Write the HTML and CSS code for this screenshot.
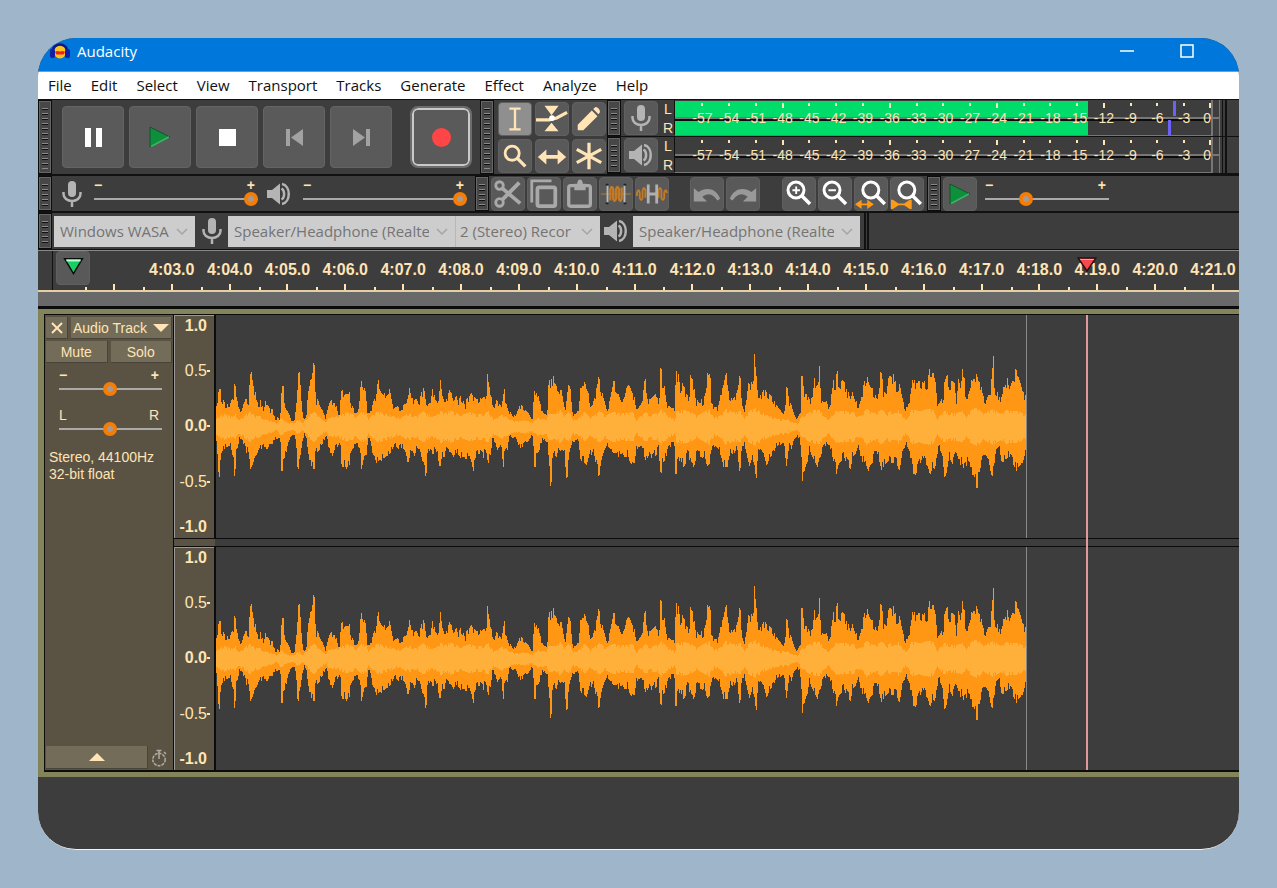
FILE: index.html
```html
<!DOCTYPE html>
<html lang="en">
<head>
<meta charset="utf-8">
<title>Audacity</title>
<link rel="stylesheet" href="styles.css">
</head>
<body>
<svg class="defs" aria-hidden="true">
  <symbol id="mic" viewBox="0 0 20 28"><rect x="6" y="1" width="8" height="16" rx="4" fill="currentColor"/><path d="M1.500 12v2a8.500 7 0 0 0 17 0v-2M10 21v6" fill="none" stroke="currentColor" stroke-width="2.500"/></symbol>
  <symbol id="speaker" viewBox="0 0 26 24"><path d="M1 8h5l8-6.500v21L6 16H1z" fill="currentColor"/><path d="M15.500 6.500c3.500 2 3.500 9 0 11M16 2c9 1.500 9 18.500 0 20" fill="none" stroke="currentColor" stroke-width="2.500"/></symbol>
  <symbol id="play" viewBox="0 0 24 24"><path d="M2 2v20l20-10z" fill="#0e8f3c" stroke="#17502c" stroke-width="1"/><path d="M3 21.500l18-9.500" stroke="#3fb468" stroke-width="1.500"/></symbol>
  <symbol id="lens" viewBox="0 0 32 32"><circle cx="13" cy="12" r="8" fill="none" stroke="#fff" stroke-width="3"/><path d="M19 18l8 8" stroke="#fff" stroke-width="3.500"/></symbol>
  <symbol id="chevron" viewBox="0 0 12 8"><path d="M1 1l5 5 5-5" fill="none" stroke="#a5a5a5" stroke-width="1.500"/></symbol>
  <symbol id="wave" viewBox="18 -75 2430 672" preserveAspectRatio="none">
    <g class="envelope" fill="#ff9614" shape-rendering="crispEdges">
      <path d="M18 262L18 215 22 180 25 160 29 147 32 148 34 190 38 178 42 182 48 196 56 192 62 188 66 178 72 182 73 131 76 131 78 165 82 182 86 205 92 218 98 205 102 190 106 180 110 178 113 182 116 200 117 115 122 102 125 103 128 130 134 150 140 168 144 200 148 205 151 180 154 190 160 208 165 183 172 183 176 200 182 212 187 205 190 225 198 238 206 230 210 242 214 165 217 140 221 140 224 200 230 212 236 222 242 236 248 245 254 238 258 205 262 165 265 102 270 102 272 150 276 205 280 235 288 235 294 165 302 120 306 122 310 75 315 75 317 185 324 180 330 200 338 212 346 235 352 215 358 190 366 180 370 192 378 190 382 215 388 225 394 152 400 152 405 175 409 145 413 145 414 175 418 147 420 190 428 200 436 220 444 205 450 180 452 99 456 99 460 150 464 145 470 170 473 222 480 220 486 200 492 182 500 160 504 120 508 120 512 160 520 168 528 155 536 142 540 150 544 178 548 195 554 205 562 200 570 205 580 198 592 190 594 145 600 150 604 175 614 180 620 178 626 195 632 165 640 148 646 160 652 200 660 190 664 150 670 152 676 178 684 195 688 165 690 120 694 120 698 175 706 190 714 165 718 150 724 160 730 185 740 168 744 190 750 168 756 172 766 200 770 175 780 170 784 162 790 168 800 180 808 172 815 180 822 170 828 180 832 102 836 102 840 165 846 175 852 210 860 180 868 190 876 205 880 145 884 148 886 190 894 195 898 222 904 215 910 228 920 222 928 200 934 196 940 200 948 212 956 220 962 235 968 235 972 160 980 140 984 165 990 190 998 215 1004 225 1012 225 1016 125 1026 118 1034 103 1040 115 1042 150 1048 165 1052 150 1058 150 1064 205 1068 215 1072 135 1080 140 1084 165 1088 225 1100 222 1106 205 1110 150 1118 140 1122 103 1126 103 1130 155 1136 160 1140 205 1148 195 1156 165 1164 130 1166 108 1170 130 1178 165 1186 195 1194 205 1200 180 1208 140 1210 98 1214 98 1216 160 1226 165 1231 180V262z"/>
      <path d="M18 262L18 305 22 330 25 425 28 425 30 370 34 340 42 330 50 322 58 318 64 325 68 370 72 372 73 412 77 412 78 350 82 330 88 300 96 298 100 310 106 330 110 340 114 330 117 372 121 388 127 378 134 355 142 340 148 325 154 330 164 322 172 328 180 312 188 315 194 300 202 300 208 292 212 310 214 392 218 392 220 360 228 345 234 310 242 292 250 285 256 295 260 330 263 388 267 388 269 350 274 345 278 300 284 285 290 295 294 360 302 362 306 388 314 388 317 340 326 335 334 318 344 300 350 295 356 325 362 360 368 350 374 330 384 322 390 305 395 382 402 380 410 385 418 382 422 335 432 325 440 320 448 325 452 340 455 398 459 398 461 350 470 345 474 300 480 305 486 340 494 350 500 375 506 360 514 365 522 355 530 350 540 345 548 325 558 320 566 330 576 322 588 340 594 375 600 350 606 330 614 350 622 325 630 330 636 360 644 378 646 408 649 408 652 360 656 325 662 345 670 345 676 328 682 345 690 385 696 350 704 355 708 318 714 345 722 335 730 352 740 340 752 355 760 350 770 360 778 345 786 375 787 405 790 405 792 365 800 348 810 342 820 355 828 328 834 375 840 355 848 300 856 310 862 335 868 320 876 340 880 385 884 345 892 335 898 290 908 295 918 292 928 325 938 322 946 312 956 305 964 290 970 300 972 384 978 384 980 345 988 335 996 305 1004 300 1012 310 1016 370 1020 380 1020 440 1024 440 1026 380 1032 350 1040 350 1046 325 1052 335 1058 330 1064 345 1069 412 1073 412 1075 360 1080 350 1086 305 1098 310 1106 305 1112 365 1122 368 1130 378 1138 345 1146 345 1150 325 1156 365 1165 408 1169 408 1172 370 1182 335 1190 320 1200 325 1208 355 1218 358 1231 345V262z"/>
      <g transform="translate(1230 0)">
        <path d="M0 262L0 180 6 170 12 180 20 145 26 136 32 150 40 165 46 180 52 210 60 200 68 185 72 130 78 115 82 180 94 178 106 165 114 180 120 175 121 88 125 88 126 150 134 140 138 185 146 200 156 205 164 205 168 98 176 105 180 145 186 130 194 145 200 165 208 170 210 108 218 120 222 135 228 190 236 172 244 180 250 195 252 145 258 165 262 110 266 72 270 72 274 190 282 200 292 205 298 190 304 150 310 140 318 98 324 115 328 165 338 180 346 168 354 150 358 108 362 120 366 180 374 210 380 180 384 135 392 128 400 138 403 46 408 46 410 130 416 180 422 165 432 150 442 158 450 165 458 175 466 190 476 205 488 220 496 210 499 140 503 150 508 185 516 200 522 225 530 238 538 225 542 210 544 108 550 110 554 160 562 165 570 180 578 175 584 108 590 140 596 130 597 78 601 78 602 170 610 190 620 185 628 205 636 155 642 110 646 160 650 96 654 96 656 160 662 122 674 125 680 150 684 190 686 145 694 170 700 150 708 180 716 205 724 175 732 130 740 103 744 120 750 140 762 155 770 180 776 140 782 95 786 100 790 155 800 165 806 110 814 115 824 100 828 140 838 130 846 170 856 205 864 200 874 150 880 102 884 125 894 130 900 120 908 132 914 125 922 130 928 88 932 115 940 98 946 125 950 165 954 198 962 185 970 170 974 125 982 105 988 130 1000 125 1006 135 1010 185 1016 115 1022 150 1028 85 1032 85 1036 175 1044 180 1050 120 1056 125 1062 118 1068 130 1070 95 1074 120 1082 130 1088 165 1096 180 1104 150 1114 145 1116 50 1121 50 1122 145 1130 150 1140 180 1146 145 1154 145 1162 115 1168 150 1176 125 1184 125 1187 82 1192 110 1200 125 1206 150 1214 165 1218 165V262z"/>
        <path d="M0 262L0 345 8 340 16 355 24 345 30 370 44 370 48 335 56 322 66 318 74 355 80 368 84 345 92 360 100 340 108 350 116 325 121 398 125 398 128 370 138 355 146 330 156 315 164 320 165 405 169 405 172 378 182 355 190 385 198 370 204 320 210 375 216 365 222 385 230 345 238 350 246 355 254 350 262 382 270 370 276 335 286 318 296 330 302 345 310 382 322 382 330 340 340 345 350 330 356 370 360 405 364 350 372 310 380 345 388 378 396 360 404 375 407 412 411 412 413 350 420 325 430 340 440 378 450 355 460 345 468 322 480 315 490 310 496 345 498 392 502 360 508 320 514 330 522 300 532 292 540 300 546 370 547 425 552 425 554 385 562 370 568 330 576 350 586 370 596 390 602 350 610 330 618 315 628 315 636 345 642 370 650 405 654 380 662 365 672 350 684 380 692 390 698 350 706 345 716 315 724 365 734 370 742 418 748 380 758 370 768 330 776 355 784 392 792 380 804 365 814 370 826 370 840 392 846 340 858 315 868 330 878 400 888 405 900 375 908 350 916 372 924 380 930 408 938 385 946 385 950 350 958 325 968 350 973 415 980 400 988 350 998 375 1008 350 1016 380 1026 370 1034 395 1046 360 1050 405 1062 405 1069 445 1073 445 1074 395 1080 400 1086 350 1096 345 1106 360 1114 408 1120 408 1126 345 1138 330 1146 370 1156 360 1166 350 1178 370 1190 395 1200 375 1210 365 1214 345 1218 345V262z"/>
      </g>
    </g>
    <g id="rms" class="envelope" fill="#ffb03a" shape-rendering="crispEdges">
      <path d="M18 262L18 240 28 230 42 222 60 230 74 222 88 240 100 232 120 215 134 228 150 230 170 240 200 250 214 235 230 248 250 252 264 240 280 250 300 225 312 215 330 235 350 248 354 235 380 230 400 222 418 218 440 232 456 215 470 222 474 240 490 225 506 215 524 222 540 225 560 235 580 230 596 222 620 230 640 215 656 225 676 230 692 212 706 222 720 212 740 222 760 225 780 218 800 225 820 222 836 215 850 240 880 225 898 240 920 245 940 238 966 248 980 235 1010 240 1016 222 1036 225 1056 208 1064 228 1080 215 1086 240 1106 235 1124 218 1140 235 1170 215 1186 228 1212 215 1231 222V262z"/>
      <path transform="translate(1230 0)" d="M0 262L0 222 40 218 50 240 76 218 90 225 116 220 124 208 140 225 164 240 170 215 190 210 214 218 232 230 250 218 268 208 282 235 300 230 318 208 336 218 362 215 374 238 386 215 406 205 430 222 450 230 480 240 500 238 520 250 534 252 544 230 562 220 584 210 600 210 612 230 628 240 642 215 664 215 700 218 720 232 740 208 762 222 786 210 800 225 810 215 836 212 858 240 876 210 900 215 928 208 944 212 952 238 972 215 1000 222 1030 215 1040 235 1050 215 1074 202 1090 225 1118 208 1140 222 1160 212 1194 215 1218 225V262z"/>
    </g>
    <use href="#rms" transform="translate(0 524) scale(1 -1)"/>
  </symbol>
</svg>

<main class="window">
  <header class="titlebar">
    <svg class="logo" viewBox="0 0 20 20"><ellipse cx="10" cy="11" rx="6" ry="6.500" fill="#ffc21a"/><path d="M5 11l2-1 3 .5 3-.5 2 1-1.500 2.500h-7z" fill="#e8261c"/><path d="M3 11C2 1 18 1 17 11" fill="none" stroke="#101a86" stroke-width="2.500"/><rect x="0" y="8" width="5" height="9" rx="2" fill="#1520a0"/><rect x="15" y="8" width="5" height="9" rx="2" fill="#1520a0"/></svg>
    <h1 class="title">Audacity</h1>
    <button class="winbtn" aria-label="Minimize"><svg viewBox="0 0 14 14"><path d="M0 7h14" stroke="#fff" stroke-width="1.500"/></svg></button>
    <button class="winbtn" aria-label="Maximize"><svg viewBox="0 0 14 14"><rect x="1" y="1" width="12" height="12" fill="none" stroke="#fff" stroke-width="1.500"/></svg></button>
  </header>
  <nav class="menu">
    <button>File</button><button>Edit</button><button>Select</button><button>View</button><button>Transport</button><button>Tracks</button><button>Generate</button><button>Effect</button><button>Analyze</button><button>Help</button>
  </nav>

  <section class="row row-main">
    <span class="grip"></span>
    <div class="transport">
      <button class="big" aria-label="Pause"><svg viewBox="0 0 24 24"><path d="M4 3h6v19H4zM15 3h6v19h-6z" fill="#fff"/></svg></button>
      <button class="big" aria-label="Play"><svg><use href="#play"/></svg></button>
      <button class="big" aria-label="Stop"><svg viewBox="0 0 24 24"><path d="M4 4h17v17H4z" fill="#fff"/></svg></button>
      <button class="big" aria-label="Skip to start"><svg viewBox="0 0 24 24"><path d="M4 4h4v17H4zM21 4v17L9 12.500z" fill="#a2a2a2"/></svg></button>
      <button class="big" aria-label="Skip to end"><svg viewBox="0 0 24 24"><path d="M17 4h4v17h-4zM4 4v17l12-8.500z" fill="#a2a2a2"/></svg></button>
      <button class="big record" aria-label="Record"><i></i></button>
    </div>
    <span class="grip"></span>
    <div class="tools">
      <button class="tool active" aria-label="Selection tool"><svg viewBox="0 0 34 34"><path d="M11 6h12M11 28h12M17 6v22" stroke="#ffe4b5" stroke-width="2.500"/></svg></button>
      <button class="tool" aria-label="Envelope tool"><svg viewBox="0 0 34 34"><path d="M9 3h15l-7.500 10zM9 30h15l-7.500-9z" fill="#ffe4b5"/><path d="M0 18h14l8-2 11-6" fill="none" stroke="#ffe4b5" stroke-width="3.500"/><circle cx="17" cy="16" r="3" fill="#fff"/></svg></button>
      <button class="tool" aria-label="Draw tool"><svg viewBox="0 0 34 34"><path d="M5 29v-6L20 8l6 6-15 15zM21.500 6.500l2-2c2-1 6 3 5 5.500l-1.500 2z" fill="#ffe4b5"/></svg></button>
      <button class="tool" aria-label="Zoom tool"><svg viewBox="0 0 34 34"><circle cx="14" cy="14" r="7.500" fill="none" stroke="#ffe4b5" stroke-width="3"/><path d="M19 19l9 9" stroke="#ffe4b5" stroke-width="3.500"/></svg></button>
      <button class="tool" aria-label="Time shift tool"><svg viewBox="0 0 34 34"><path d="M2 18l9-8v6h12v-6l9 8-9 8v-6H11v6z" fill="#ffe4b5"/></svg></button>
      <button class="tool" aria-label="Multi-tool"><svg viewBox="0 0 34 34"><path d="M17 3v28M4 10l26 14M30 10L4 24" stroke="#ffe4b5" stroke-width="3.500"/></svg></button>
    </div>
    <div class="meters">
      <div class="meterbar">
        <span class="grip"></span>
        <button class="tool" aria-label="Recording level"><svg class="mic"><use href="#mic"/></svg></button>
        <div class="lr"><span>L</span><span>R</span></div>
        <div class="meter">
          <div class="level"></div><i class="peak peak-l"></i><i class="peak peak-r"></i>
          <div class="scale"><span>-57</span><span>-54</span><span>-51</span><span>-48</span><span>-45</span><span>-42</span><span>-39</span><span>-36</span><span>-33</span><span>-30</span><span>-27</span><span>-24</span><span>-21</span><span>-18</span><span>-15</span><span>-12</span><span>-9</span><span>-6</span><span>-3</span><span>0</span></div>
        </div>
        <span class="meter-end"></span>
      </div>
      <div class="meterbar">
        <span class="grip"></span>
        <button class="tool" aria-label="Playback level"><svg class="spk"><use href="#speaker"/></svg></button>
        <div class="lr"><span>L</span><span>R</span></div>
        <div class="meter">
          <div class="scale"><span>-57</span><span>-54</span><span>-51</span><span>-48</span><span>-45</span><span>-42</span><span>-39</span><span>-36</span><span>-33</span><span>-30</span><span>-27</span><span>-24</span><span>-21</span><span>-18</span><span>-15</span><span>-12</span><span>-9</span><span>-6</span><span>-3</span><span>0</span></div>
        </div>
        <span class="meter-end"></span>
      </div>
    </div>
  </section>

  <section class="row row-mix">
    <span class="grip"></span>
    <svg class="mic"><use href="#mic"/></svg>
    <label class="slider wide"><span class="ends"><b>−</b><b>+</b></span><input type="range" value="100" aria-label="Recording volume"></label>
    <svg class="spk"><use href="#speaker"/></svg>
    <label class="slider wide"><span class="ends"><b>−</b><b>+</b></span><input type="range" value="100" aria-label="Playback volume"></label>
    <span class="grip"></span>
    <div class="set">
      <button class="tool" aria-label="Cut"><svg viewBox="0 0 34 34"><g fill="none" stroke="#a9a9a9"><circle cx="8" cy="8" r="4" stroke-width="3"/><circle cx="8" cy="26" r="4" stroke-width="3"/><path d="M11 11l19 16M11 23L29 5" stroke-width="4"/></g></svg></button>
      <button class="tool" aria-label="Copy"><svg viewBox="0 0 34 34"><g fill="none" stroke="#a9a9a9" stroke-width="4"><rect x="10" y="10" width="19" height="20" rx="2"/><path d="M4 26V3h21" stroke-width="3"/></g></svg></button>
      <button class="tool" aria-label="Paste"><svg viewBox="0 0 34 34"><rect x="5" y="8" width="23" height="22" rx="2" fill="none" stroke="#a9a9a9" stroke-width="3.500"/><path d="M11 6h3c0-6 6-6 6 0h3v7H11z" fill="#a9a9a9"/></svg></button>
      <button class="tool" aria-label="Trim"><svg viewBox="0 0 34 34"><path d="M1 17h32" stroke="#c27a25"/><path d="M11 24V12q1.500-5 3 0v10q1.500 5 3 0V12q1.500-5 3 0v10q1.500 5 3 0V10" fill="none" stroke="#c27a25" stroke-width="2.500"/><path d="M8 8v18M26 8v18" stroke="#b8b8b8" stroke-width="2"/><path d="M6 7h3M6 27h3M25 7h3M25 27h3" stroke="#222" stroke-width="2"/></svg></button>
      <button class="tool" aria-label="Silence"><svg viewBox="0 0 34 34"><path d="M1 19v-3q2-6 3 0v5q1.500 5 3 0v-8q1.500-5 3 0v8M24 21v-8q1.500-5 3 0v8q1.500 5 3 0v-5q1.500-6 3 0" fill="none" stroke="#c27a25" stroke-width="2"/><path d="M13 7v20M22 7v20M13 17h9" stroke="#b0b0b0" stroke-width="3"/></svg></button>
    </div>
    <div class="set set-undo">
      <button class="tool" aria-label="Undo"><svg viewBox="0 0 34 34"><path d="M3 11v14h14l-5-5c6-5 12-3 16 4l3-2C27 11 16 9 8 15z" fill="#999"/></svg></button>
      <button class="tool" aria-label="Redo"><svg viewBox="0 0 34 34"><path d="M31 11v14H17l5-5c-6-5-12-3-16 4l-3-2C7 11 18 9 26 15z" fill="#999"/></svg></button>
    </div>
    <div class="set set-zoom">
      <button class="tool" aria-label="Zoom in"><svg viewBox="0 0 34 34"><use href="#lens" width="34" height="34"/><path d="M10 13h8M14 9v8" stroke="#fff" stroke-width="2"/></svg></button>
      <button class="tool" aria-label="Zoom out"><svg viewBox="0 0 34 34"><use href="#lens" width="34" height="34"/><path d="M10 13h8" stroke="#fff" stroke-width="2"/></svg></button>
      <button class="tool" aria-label="Fit selection"><svg viewBox="0 0 34 34"><use href="#lens" x="3" width="34" height="34"/><path d="M0 28l7-5v4h2v-4l0 4h2v-4l0 4h2v-4l7 5-7 5v-4H7v4z" fill="#ff9a16"/></svg></button>
      <button class="tool" aria-label="Fit project"><svg viewBox="0 0 34 34"><use href="#lens" x="3" width="34" height="34"/><path d="M0 23h2l6 4h6l6-4h2v10h-2l-6-4H8l-6 4H0z" fill="#ff9a16"/></svg></button>
    </div>
    <span class="grip"></span>
    <button class="tool" aria-label="Play at speed"><svg class="speedicon"><use href="#play"/></svg></button>
    <label class="slider speed"><span class="ends"><b>−</b><b>+</b></span><input type="range" value="31" aria-label="Playback speed"></label>
  </section>

  <section class="row row-device">
    <span class="grip"></span>
    <span class="pick pick-host"><select aria-label="Audio host"><option>Windows WASAPI</option></select><svg><use href="#chevron"/></svg></span>
    <svg class="mic"><use href="#mic"/></svg>
    <span class="pick pick-dev"><select aria-label="Recording device"><option>Speaker/Headphone (Realtek)</option></select><svg><use href="#chevron"/></svg></span>
    <span class="pick pick-chan"><select aria-label="Recording channels"><option>2 (Stereo) Recor</option></select><svg><use href="#chevron"/></svg></span>
    <svg class="spk"><use href="#speaker"/></svg>
    <span class="pick pick-dev"><select aria-label="Playback device"><option>Speaker/Headphone (Realtek)</option></select><svg><use href="#chevron"/></svg></span>
    <span class="dock-end"></span>
  </section>

  <section class="timeline">
    <button class="tool pin" aria-label="Pinned play head"><svg viewBox="0 0 34 34"><path d="M8 7h19L17.500 23z" fill="#17cf66" stroke="#0b0b0b" stroke-width="1.500"/><path d="M10 9h15" stroke="#b6ffd0" stroke-width="2"/></svg></button>
    <div class="times"><span></span><span>4:03.0</span><span>4:04.0</span><span>4:05.0</span><span>4:06.0</span><span>4:07.0</span><span>4:08.0</span><span>4:09.0</span><span>4:10.0</span><span>4:11.0</span><span>4:12.0</span><span>4:13.0</span><span>4:14.0</span><span>4:15.0</span><span>4:16.0</span><span>4:17.0</span><span>4:18.0</span><span>4:19.0</span><span>4:20.0</span><span>4:21.0</span></div>
    <svg class="head" viewBox="0 0 20 15"><path d="M1 1h18l-9 13z" fill="#f8484d" stroke="#2a1010" stroke-width="1.500"/><path d="M3 2.500h14" stroke="#ff9a9a"/></svg>
  </section>
  <div class="strip"></div>

  <section class="track">
    <aside class="panel">
      <div class="pair pair-title">
        <button class="flat close" aria-label="Close track"><svg viewBox="0 0 12 12"><path d="M1 1l10 10M11 1L1 11" stroke="#ffe4b5" stroke-width="2"/></svg></button>
        <button class="flat name">Audio Track<svg viewBox="0 0 16 8"><path d="M0 0h16L8 8z" fill="#ffe4b5"/></svg></button>
      </div>
      <div class="pair"><button class="flat">Mute</button><button class="flat">Solo</button></div>
      <label class="slider gain"><span class="ends"><b>−</b><b>+</b></span><input type="range" value="49" aria-label="Gain"></label>
      <label class="slider gain pan"><span class="ends"><span>L</span><span>R</span></span><input type="range" value="49" aria-label="Pan"></label>
      <p class="format">Stereo, 44100Hz<br>32-bit float</p>
      <div class="foot">
        <button class="flat" aria-label="Collapse track"><svg viewBox="0 0 16 8"><path d="M0 8h16L8 0z" fill="#ffe4b5"/></svg></button>
        <svg class="watch" viewBox="0 0 18 18"><circle cx="9" cy="10.500" r="6.200" fill="none" stroke="#b0aca2" stroke-width="1.500" stroke-dasharray="3 1"/><path d="M9 1v9M6.500 1.500h5M14 3l2 2" stroke="#b0aca2" stroke-width="1.500"/></svg>
      </div>
    </aside>
    <div class="lanes">
      <div class="lane">
        <div class="vruler"><b>1.0</b><span class="dash">0.5</span><b class="dash">0.0</b><span class="dash">-0.5</span><b>-1.0</b></div>
        <svg class="clip" preserveAspectRatio="none"><use href="#wave"/></svg>
      </div>
      <div class="lane">
        <div class="vruler"><b>1.0</b><span class="dash">0.5</span><b class="dash">0.0</b><span class="dash">-0.5</span><b>-1.0</b></div>
        <svg class="clip" preserveAspectRatio="none"><use href="#wave"/></svg>
      </div>
      <i class="cursor"></i>
    </div>
  </section>
</main>
<script src="wave.js"></script>
</body>
</html>
```
FILE: wave.js
```js
// Resamples each envelope outline into one bar per pixel column, as a sample-peak display draws it.
const AXIS = 262;
const STEP = 3;

function heightAt(points, x) {
  for (let i = 1; i < points.length; i++) {
    const [x0, y0] = points[i - 1];
    const [x1, y1] = points[i];
    if (x <= x1 && x1 > x0) return y0 + (y1 - y0) * (x - x0) / (x1 - x0);
  }
  return points[points.length - 1][1];
}

document.querySelectorAll('.envelope path').forEach((path, seed) => {
  const numbers = path.getAttribute('d').split('L')[1].split('V')[0].trim().split(' ').map(Number);
  const points = [];
  for (let i = 0; i < numbers.length; i += 2) points.push([numbers[i], numbers[i + 1]]);
  const start = points[0][0];
  const end = points[points.length - 1][0];
  let d = `M${start} ${AXIS}`;
  let n = seed * 31;
  for (let x = start; x < end; x += STEP) {
    const noise = Math.abs(Math.sin(++n * 12.9898) * 43758.5453) % 1;
    const level = heightAt(points, x + STEP / 2) - AXIS;
    const gain = noise < 0.3 ? 0.84 : 0.97 + noise * 0.06;
    d += `V${Math.round(AXIS + level * gain)}H${x + STEP}`;
  }
  path.setAttribute('d', `${d}V${AXIS}z`);
});
```
FILE: styles.css
```css
* { box-sizing: border-box; }
body {
  margin: 0;
  padding: 38px;
  background: #9fb5c9;
  font: 14px/16px "Liberation Sans", Arial, sans-serif;
  color: #ffe4b5;
}
button { font: inherit; color: inherit; border: 0; padding: 0; margin: 0; background: none; }
svg { display: block; flex: none; }
.defs { position: absolute; width: 0; height: 0; }
.window {
  min-height: calc(100vh - 76px);
  border-radius: 38px;
  border-bottom: 1px solid #f4f4f4;
  overflow: hidden;
  background: #3d3d3d;
}

.titlebar {
  display: flex;
  align-items: center;
  height: 34px;
  padding: 0 45px 8px 12px;
  background: #0078db;
  border-bottom: 1px solid #57a6ea;
}
.logo { width: 20px; height: 20px; }
.title { flex: 1; margin: 0 0 0 7px; font: 400 15px/20px "Open Sans", sans-serif; color: #fff; }
.winbtn { width: 14px; margin-left: 46px; }
.winbtn svg { width: 14px; height: 14px; }

.menu {
  display: flex;
  gap: 19px;
  height: 27px;
  padding: 0 10px 2px;
  background: #fff;
  color: #111;
  font: 15px/24px "Open Sans", sans-serif;
}

.row {
  display: flex;
  align-items: center;
  border-bottom: 1px solid #111;
  border-top: 1px solid #111;
}
.grip {
  flex: none;
  align-self: stretch;
  width: 14px;
  border: 1px solid #0c0c0c;
  outline: 1px solid #666;
  outline-offset: -2px;
  background: repeating-linear-gradient(#474747 0 3px, #8a8a8a 3px 4px, #111 4px 5px) content-box, #474747;
  padding: 4px 3px;
}
.row-main { height: 76px; }
.transport { display: flex; gap: 5px; padding: 0 9px 0 10px; }
.big {
  display: flex;
  align-items: center;
  justify-content: center;
  width: 62px;
  height: 62px;
  border: 1px solid #646464;
  border-radius: 4px;
  background: #5a5a5a;
}
.big svg { width: 24px; height: 24px; }
.record {
  width: 58px;
  height: 58px;
  margin: 2px 1px 2px 15px;
  border: 2px solid #c9c9c9;
  border-radius: 6px;
  outline: 2px solid #6c6c6c;
}
.record i { width: 19px; height: 19px; border-radius: 50%; background: #ff4545; }
.tools { display: grid; grid-template-columns: repeat(3, 34px); gap: 3px; padding: 0 1px 0 4px; }
.tool {
  display: flex;
  flex: none;
  align-items: center;
  justify-content: center;
  width: 34px;
  height: 34px;
  border-radius: 4px;
  background: #595959;
  border: 1px solid #606060;
}
.tool.active { background: #8f8f8f; }
.tool > svg { width: 32px; height: 32px; }
.mic, .tool > .mic { width: 20px; height: 28px; color: #b4b4b4; }
.spk, .tool > .spk { width: 26px; height: 24px; color: #b4b4b4; }
.tool > .speedicon { width: 24px; height: 24px; }

.meters { flex: 1; display: flex; flex-direction: column; align-self: stretch; }
.meterbar { flex: 1; display: flex; align-items: center; border-bottom: 1px solid #111; }
.meterbar .tool { margin: 0 4px 0 3px; height: 34px; }
.lr { display: flex; flex-direction: column; gap: 3px; width: 12px; text-align: center; }
.meter {
  position: relative;
  flex: 1;
  align-self: stretch;
  border-left: 1px solid #111;
  border-right: 2px solid #777;
  border-bottom: 1px solid #777;
  background: linear-gradient(transparent 17px, #777 17px 19px, #0c0c0c 19px 21px, transparent 21px);
}
.meter-end {
  align-self: stretch;
  width: 14px;
  margin-right: 12px;
  border: solid #111;
  border-width: 0 2px 0 0;
  background:
    linear-gradient(#111, #111) 9px 0 / 1px 100% no-repeat,
    linear-gradient(#777, #777) 6px 0 / 1px 100% no-repeat,
    linear-gradient(#777, #777) 0 17px / 6px 2px no-repeat;
}
.level {
  position: absolute;
  inset: 1px auto 0 0;
  width: 77%;
  background: linear-gradient(#00dc69 16px, #777 16px 18px, #0c0c0c 18px 20px, #00dc69 20px);
}
.peak { position: absolute; width: 3px; height: 15px; background: #6c62f5; }
.peak-l { top: 1px; left: 93%; }
.peak-r { bottom: 0; left: 92%; }
.scale { position: relative; display: flex; margin-left: 14px; }
.scale span {
  flex: 2 0 0;
  display: flex;
  justify-content: center;
  padding-top: 10px;
  background: linear-gradient(#ffe4b5, #ffe4b5) 50% 3px / 2px 3px no-repeat;
}
.scale span:nth-child(4n) { background-size: 2px 5px; }
.scale span:last-child { flex-grow: 1; justify-content: flex-end; background-position: 100% 3px; }

.slider { display: flex; flex-direction: column; }
.ends { display: flex; justify-content: space-between; height: 13px; padding-right: 3px; line-height: 13px; }
.slider input {
  appearance: none;
  width: 100%;
  height: 14px;
  margin: 0;
  background: linear-gradient(#aaa, #aaa) 50% / 100% 2px no-repeat;
}
.slider input::-webkit-slider-thumb {
  appearance: none;
  width: 14px;
  height: 14px;
  border: 4px solid #f57c05;
  border-radius: 50%;
  background: #a89a90;
}
.row-mix { height: 37px; }
.row-mix > .slider { padding-bottom: 2px; }
.row-mix > .mic { margin: 0 12px 0 10px; }
.row-mix > .spk { margin: 0 11px 0 8px; }
.wide { width: 164px; }
.wide + .grip { margin-left: 8px; }
.set { display: flex; gap: 2px; padding-left: 2px; }
.set-undo { padding-left: 21px; }
.set-zoom { padding: 0 3px 0 22px; }
.row-mix > .tool { margin: 0 8px 0 2px; }
.speed { width: 124px; }

.row-device { height: 38px; }
.pick { position: relative; flex: none; height: 31px; margin-left: 2px; }
.pick select {
  appearance: none;
  width: 100%;
  height: 100%;
  margin: 0;
  padding: 0 26px 0 6px;
  border: 0;
  border-radius: 0;
  background: #cdcdcd;
  color: #747474;
  font: 15px/31px "Open Sans", sans-serif;
}
.pick svg { position: absolute; right: 7px; top: 12px; width: 12px; height: 8px; pointer-events: none; }
.pick-host { width: 141px; }
.pick-dev { width: 227px; margin-left: 0; }
.pick-chan { width: 145px; margin-left: 0; border-left: 1px solid #b8b8b8; }
.pick-chan select { padding-left: 4px; }
.row-device > .mic { margin: 0 6px 0 7px; }
.row-device > .spk { margin: 0 4px 0 3px; }
.dock-end { align-self: stretch; width: 5px; margin-left: 4px; border: solid #111; border-width: 0 2px; }

.timeline {
  position: relative;
  display: flex;
  height: 42px;
  padding-left: 18px;
  border-top: 1px solid #888;
  border-bottom: 2px solid #e6cfa5;
  overflow: hidden;
  background: linear-gradient(#111, #111) 14px 0 / 1px 100% no-repeat;
}
.pin { margin-right: -5px; }
.times { flex: 1; display: flex; margin-right: -3px; font: 700 16px/38px "Liberation Sans", Arial, sans-serif; }
.times span {
  flex: 1 0 0;
  display: flex;
  justify-content: center;
  background:
    linear-gradient(#ffe4b5, #ffe4b5) 50% 100% / 2px 6px no-repeat,
    linear-gradient(#ffe4b5, #ffe4b5) 0 100% / 2px 3px no-repeat;
}
.head { position: absolute; left: 1039px; top: 6px; width: 20px; height: 15px; }
.strip { height: 17px; background: #696969; border-bottom: 3px solid #0c0c0c; }

.track {
  display: flex;
  border: solid #8e8e5c;
  border-width: 5px 0 5px 6px;
  border-color: #84845a;
  background: #5a5343;
}
.panel {
  flex: none;
  display: flex;
  flex-direction: column;
  width: 130px;
  padding: 2px 1px 1px 1px;
  border: solid #0c0c0c;
  border-width: 1px 1px 2px 1px;
}
.pair { display: grid; grid-template-columns: 1fr 1fr; gap: 3px; margin-bottom: 2px; }
.pair-title { grid-template-columns: 22px 1fr; }
.flat {
  display: flex;
  align-items: center;
  justify-content: center;
  height: 22px;
  background: #736c58;
  border: solid #49443a;
  border-width: 0 1px 1px 0;
}
.close svg { width: 12px; height: 12px; }
.name { justify-content: space-between; padding: 0 2px; white-space: nowrap; }
.name svg { width: 16px; height: 8px; }
.gain { width: 103px; margin: 4px auto 0 13px; }
.pan { margin-top: 13px; }
.format { margin: 13px 0 auto 3px; line-height: 17px; white-space: nowrap; }
.foot { display: flex; align-items: center; justify-content: space-between; }
.foot .flat { width: 102px; height: 23px; }
.foot .flat svg { width: 16px; height: 8px; }
.watch { width: 18px; height: 18px; margin-right: 4px; }

.lanes {
  position: relative;
  flex: 1;
  min-width: 0;
  display: flex;
  flex-direction: column;
  gap: 7px;
  border-bottom: 2px solid #0c0c0c;
  background: linear-gradient(90deg, transparent 41px, #3d3d3d 41px);
}
.lane { display: flex; height: 225px; border: solid #0c0c0c; border-width: 1px 0; background: #3d3d3d; }
.lane + .lane { height: 224px; border-bottom: 0; }
.vruler {
  flex: none;
  display: grid;
  grid-template-rows: 22fr 68fr 44fr 68fr 22fr;
  align-items: center;
  justify-items: end;
  width: 42px;
  padding-right: 7px;
  border: solid #0c0c0c;
  border-width: 0 2px 0 0;
  box-shadow: inset 1px 1px #999;
  background: #5a5343;
  font-size: 16px;
}
.vruler > * { position: relative; }
.dash::after { content: ""; position: absolute; left: 100%; top: 7px; width: 3px; height: 2px; background: #ffe4b5; }
.clip { width: 811px; height: 223px; border-right: 1px solid #8a8a8a; }
.cursor { position: absolute; top: 1px; bottom: 0; left: 912px; width: 2px; background: #e0999c; }
```
